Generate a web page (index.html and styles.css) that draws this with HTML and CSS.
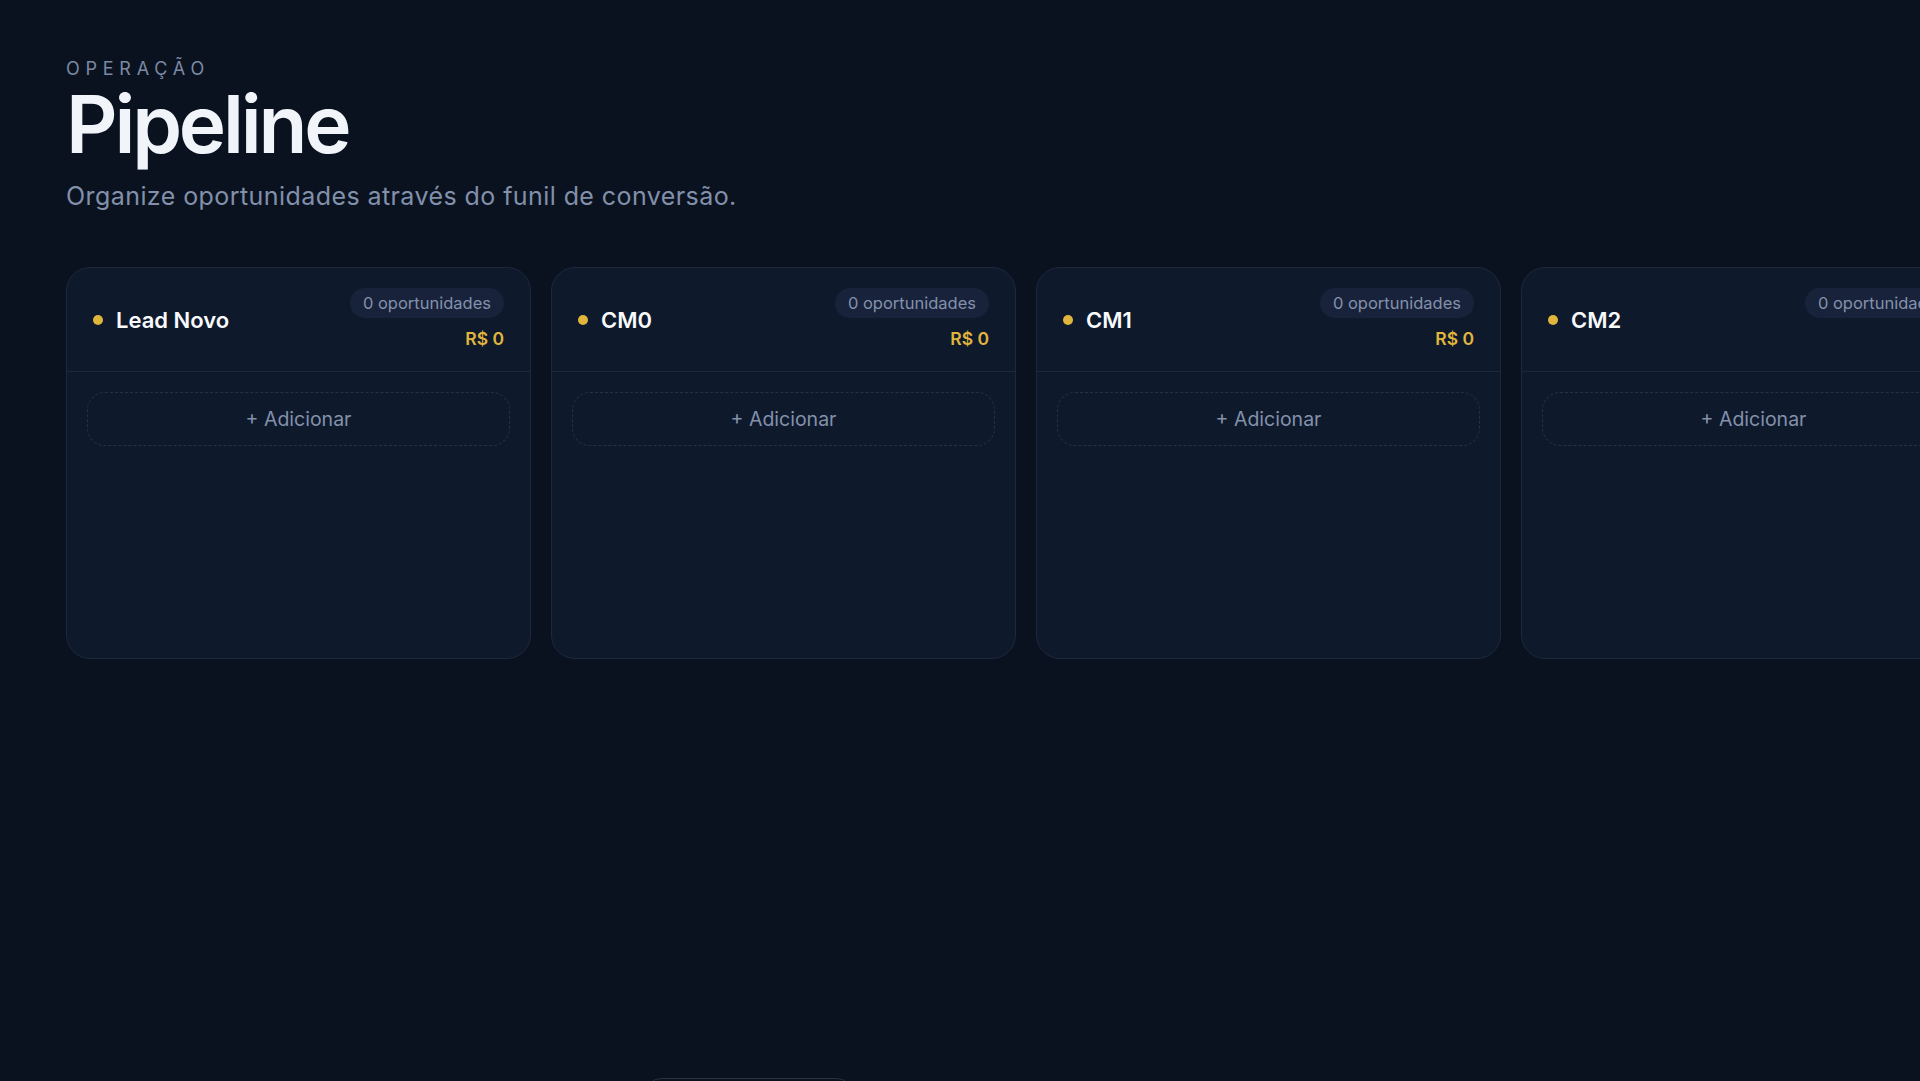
FILE: index.html
```html
<!DOCTYPE html>
<html lang="pt-BR">
<head>
<meta charset="utf-8">
<title>Pipeline</title>
<link rel="stylesheet" href="styles.css">
</head>
<body>
<main class="page">
  <header class="page-head">
    <p class="eyebrow">Operação</p>
    <h1 class="title">Pipeline</h1>
    <p class="subtitle">Organize oportunidades através do funil de conversão.</p>
  </header>

  <section class="board">
    <article class="stage">
      <div class="stage-head">
        <div class="stage-name"><span class="dot"></span><span>Lead Novo</span></div>
        <div class="stage-meta">
          <span class="count">0 oportunidades</span>
          <span class="total">R$ 0</span>
        </div>
      </div>
      <div class="stage-body">
        <button class="add">+ Adicionar</button>
      </div>
    </article>

    <article class="stage">
      <div class="stage-head">
        <div class="stage-name"><span class="dot"></span><span>CM0</span></div>
        <div class="stage-meta">
          <span class="count">0 oportunidades</span>
          <span class="total">R$ 0</span>
        </div>
      </div>
      <div class="stage-body">
        <button class="add">+ Adicionar</button>
      </div>
    </article>

    <article class="stage">
      <div class="stage-head">
        <div class="stage-name"><span class="dot"></span><span>CM1</span></div>
        <div class="stage-meta">
          <span class="count">0 oportunidades</span>
          <span class="total">R$ 0</span>
        </div>
      </div>
      <div class="stage-body">
        <button class="add">+ Adicionar</button>
      </div>
    </article>

    <article class="stage">
      <div class="stage-head">
        <div class="stage-name"><span class="dot"></span><span>CM2</span></div>
        <div class="stage-meta">
          <span class="count">0 oportunidades</span>
          <span class="total">R$ 0</span>
        </div>
      </div>
      <div class="stage-body">
        <button class="add">+ Adicionar</button>
      </div>
    </article>

    <article class="stage">
      <div class="stage-head">
        <div class="stage-name"><span class="dot"></span><span>CM3</span></div>
        <div class="stage-meta">
          <span class="count">0 oportunidades</span>
          <span class="total">R$ 0</span>
        </div>
      </div>
      <div class="stage-body">
        <button class="add">+ Adicionar</button>
      </div>
    </article>
  </section>
</main>

<div class="dock"></div>
</body>
</html>
```

FILE: styles.css
```css
* {
  box-sizing: border-box;
}

html,
body {
  margin: 0;
  height: 100%;
  overflow: hidden;
}

body {
  background: #0a1220;
  font-family: Inter, "Noto Sans", "Liberation Sans", sans-serif;
  color: #f1f5f9;
}

.page {
  padding: 56px 0 0 66px;
}

/* heading block */
.eyebrow {
  margin: 0;
  font-size: 18px;
  line-height: 25px;
  letter-spacing: 0.32em;
  text-transform: uppercase;
  color: #7c89a3;
}

.title {
  margin: 3px 0 0;
  font-size: 80px;
  line-height: 80px;
  font-weight: 600;
  letter-spacing: -0.04em;
  color: #f1f5f9;
}

.subtitle {
  margin: 16px 0 0;
  font-size: 25px;
  line-height: 32px;
  letter-spacing: 0.017em;
  color: #8290aa;
}

/* kanban board */
.board {
  display: flex;
  gap: 20px;
  margin-top: 55px;
  overflow: hidden;
}

.stage {
  flex: 0 0 465px;
  background: #0f192c;
  border: 1px solid #1d283d;
  border-radius: 24px;
  display: flex;
  flex-direction: column;
}

.stage-head {
  display: flex;
  align-items: center;
  justify-content: space-between;
  padding: 20px 26px;
  border-bottom: 1px solid #1d283d;
}

.stage-name {
  display: flex;
  align-items: center;
  gap: 13px;
  font-size: 22px;
  font-weight: 600;
  color: #f8fafc;
}

.dot {
  width: 10px;
  height: 10px;
  border-radius: 50%;
  background: #e0b53c;
}

.stage-meta {
  display: flex;
  flex-direction: column;
  align-items: flex-end;
  gap: 8px;
}

.count {
  height: 30px;
  line-height: 30px;
  padding: 0 13px;
  border-radius: 15px;
  background: #18223a;
  color: #8391ab;
  font-size: 16.5px;
}

.total {
  font-size: 17.5px;
  line-height: 25px;
  font-weight: 600;
  color: #e0b53c;
}

.stage-body {
  padding: 20px;
  min-height: 286px;
}

.add {
  display: block;
  width: 100%;
  height: 54px;
  border: 1px dashed #253149;
  border-radius: 18px;
  background: transparent;
  color: #8391ab;
  font-family: inherit;
  font-size: 19.5px;
  cursor: pointer;
}

/* floating bar peeking from the bottom edge */
.dock {
  position: fixed;
  left: 645px;
  top: 1078px;
  width: 208px;
  height: 60px;
  border: 1px solid #2b313b;
  border-radius: 16px;
  background: #0b131f;
}
```
